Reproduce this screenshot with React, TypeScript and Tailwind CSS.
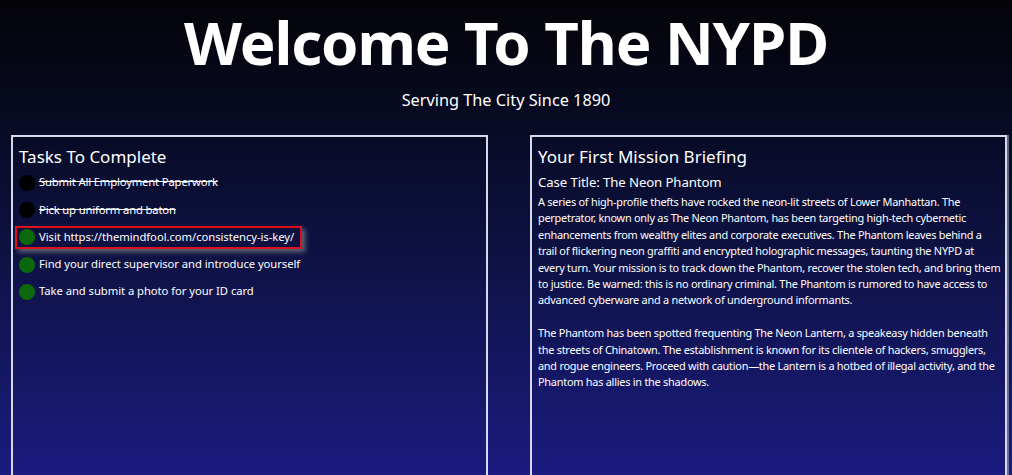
import React from 'react';

type Task = { label: string; done: boolean; highlight?: boolean };

const TASKS: Task[] = [
  { label: 'Submit All Employment Paperwork', done: true },
  { label: 'Pick up uniform and baton', done: true },
  { label: 'Visit https://themindfool.com/consistency-is-key/', done: false, highlight: true },
  { label: 'Find your direct supervisor and introduce yourself', done: false },
  { label: 'Take and submit a photo for your ID card', done: false },
];

function TaskRow({ task }: { task: Task }) {
  return (
    <li className="flex h-[27.3px] items-center">
      <div
        className={
          task.highlight
            ? 'flex h-[23px] items-center gap-[4px] border-2 border-[#e0101a] pl-[2px] pr-[6px] shadow-[3px_3px_5px_rgba(140,140,140,0.7)]'
            : 'flex items-center gap-[4px] border-2 border-transparent pl-[2px]'
        }
      >
        <span
          className={
            task.done
              ? 'h-[16px] w-[16px] shrink-0 rounded-full bg-black'
              : 'h-[16px] w-[16px] shrink-0 rounded-full bg-[#0b690b]'
          }
        />
        <span
          className={
            task.done ? 'text-[11.25px] tracking-[-0.15px] line-through' : 'text-[11.25px] tracking-[-0.05px]'
          }
        >
          {task.label}
        </span>
      </div>
    </li>
  );
}

function App() {
  return (
    <div
      className="h-screen overflow-hidden bg-gradient-to-b from-[#040408] to-[#1b1b80] text-white"
      style={{ fontFamily: '"Noto Sans", sans-serif' }}
    >
      <header className="text-center">
        <h1 className="pt-[7px] text-[60px] font-bold leading-[70px] tracking-[-1.1px]">Welcome To The NYPD</h1>
        <p className="mt-[11px] text-[16.3px] leading-[24px]">Serving The City Since 1890</p>
      </header>

      <main className="mt-[23px] flex gap-[42px] pl-[11px]">
        <section className="h-[400px] w-[477px] border-2 border-[#d8d8ea] px-[6px] pt-[8px]">
          <h2 className="text-[17px] leading-[24px]">Tasks To Complete</h2>
          <ul className="-ml-[4px]">
            {TASKS.map((t) => (
              <TaskRow key={t.label} task={t} />
            ))}
          </ul>
        </section>

        <section className="h-[400px] w-[477px] border-2 border-[#d8d8ea] pl-[6px] pr-[2px] pt-[8px] shadow-[2px_0_0_rgba(160,160,170,0.6)]">
          <h2 className="text-[17px] leading-[24px]">Your First Mission Briefing</h2>
          <h3 className="mt-[3px] text-[13.2px] tracking-[-0.1px] leading-[20px]">Case Title: The Neon Phantom</h3>
          <p className="mt-[2px] whitespace-nowrap text-[10.9px] leading-[16.4px] tracking-[-0.24px]">
            A series of high-profile thefts have rocked the neon-lit streets of Lower Manhattan. The
            <br />
            perpetrator, known only as The Neon Phantom, has been targeting high-tech cybernetic
            <br />
            enhancements from wealthy elites and corporate executives. The Phantom leaves behind a
            <br />
            trail of flickering neon graffiti and encrypted holographic messages, taunting the NYPD at
            <br />
            every turn. Your mission is to track down the Phantom, recover the stolen tech, and bring them
            <br />
            to justice. Be warned: this is no ordinary criminal. The Phantom is rumored to have access to
            <br />
            advanced cyberware and a network of underground informants.
          </p>
          <p className="mt-[16.4px] whitespace-nowrap text-[10.9px] leading-[16.4px] tracking-[-0.24px]">
            The Phantom has been spotted frequenting The Neon Lantern, a speakeasy hidden beneath
            <br />
            the streets of Chinatown. The establishment is known for its clientele of hackers, smugglers,
            <br />
            and rogue engineers. Proceed with caution—the Lantern is a hotbed of illegal activity, and the
            <br />
            Phantom has allies in the shadows.
          </p>
        </section>
      </main>
    </div>
  );
}

export default App;
